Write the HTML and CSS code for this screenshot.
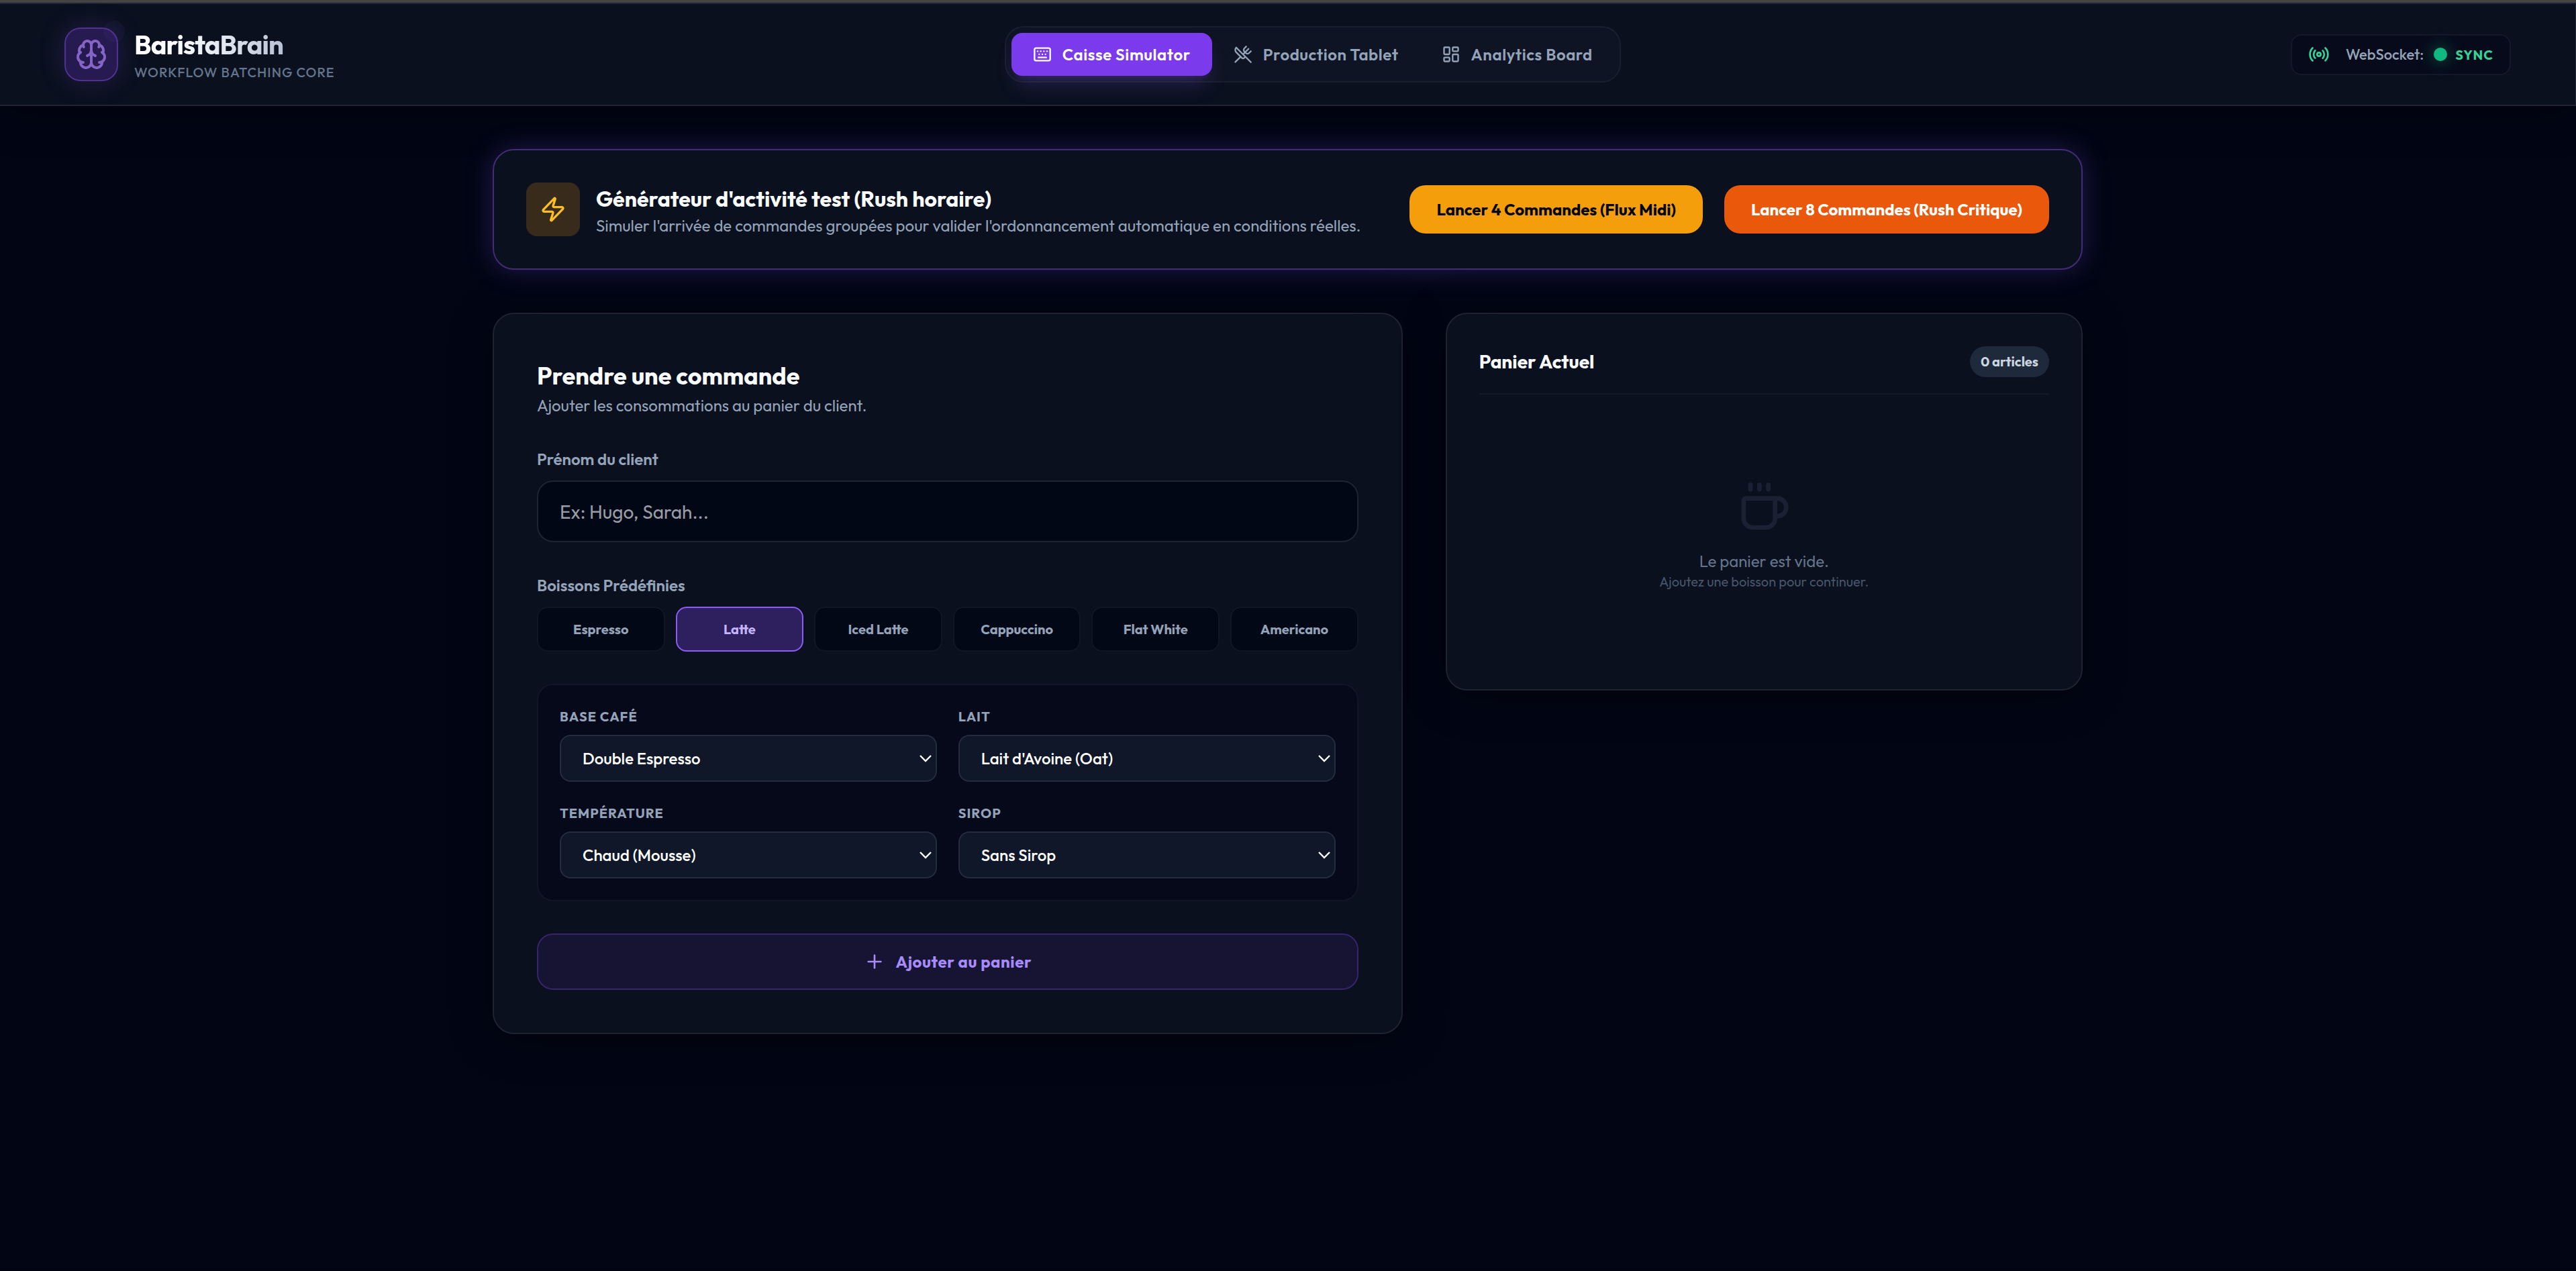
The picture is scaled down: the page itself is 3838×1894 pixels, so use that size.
FILE: index.html
```html
<!DOCTYPE html>
<html lang="fr">
<head>
  <meta charset="UTF-8">
  <meta name="viewport" content="width=device-width, initial-scale=1.0">
  <title>BaristaBrain</title>
  <link rel="stylesheet" href="styles.css">
</head>
<body>
  <header class="header">
    <div class="brand">
      <div class="logo">
        <svg class="icon" viewBox="0 0 24 24"><path d="M12 5a3 3 0 1 0-5.997.125 4 4 0 0 0-2.526 5.77 4 4 0 0 0 .556 6.588A4 4 0 1 0 12 18Z"/><path d="M12 5a3 3 0 1 1 5.997.125 4 4 0 0 1 2.526 5.77 4 4 0 0 1-.556 6.588A4 4 0 1 1 12 18Z"/><path d="M15 13a4.5 4.5 0 0 1-3-4 4.5 4.5 0 0 1-3 4"/><path d="M17.599 6.5a3 3 0 0 0 .399-1.375"/><path d="M6.003 5.125A3 3 0 0 0 6.401 6.5"/><path d="M3.477 10.896a4 4 0 0 1 .585-.396"/><path d="M19.938 10.5a4 4 0 0 1 .585.396"/><path d="M6 18a4 4 0 0 1-1.967-.516"/><path d="M19.967 17.484A4 4 0 0 1 18 18"/></svg>
      </div>
      <div>
        <h1 class="brand-name"><span>BaristaBrain</span></h1>
        <p class="brand-sub">WORKFLOW BATCHING CORE</p>
      </div>
    </div>

    <nav class="tabs">
      <button class="tab active">
        <svg class="icon" viewBox="0 0 24 24"><path d="M10 8h.01"/><path d="M12 12h.01"/><path d="M14 8h.01"/><path d="M16 12h.01"/><path d="M18 8h.01"/><path d="M6 8h.01"/><path d="M7 16h10"/><path d="M8 12h.01"/><rect width="20" height="16" x="2" y="4" rx="2"/></svg>
        Caisse Simulator
      </button>
      <button class="tab">
        <svg class="icon" viewBox="0 0 24 24"><path d="m16 2-2.3 2.3a3 3 0 0 0 0 4.2l1.8 1.8a3 3 0 0 0 4.2 0L22 8"/><path d="M15 15 3.3 3.3a4.2 4.2 0 0 0 0 6l7.3 7.3c.7.7 2 .7 2.8 0L15 15Zm0 0 7 7"/><path d="m2.1 21.8 6.4-6.3"/><path d="m19 5-7 7"/></svg>
        Production Tablet
      </button>
      <button class="tab">
        <svg class="icon" viewBox="0 0 24 24"><rect width="7" height="9" x="3" y="3" rx="1"/><rect width="7" height="5" x="14" y="3" rx="1"/><rect width="7" height="9" x="14" y="12" rx="1"/><rect width="7" height="5" x="3" y="16" rx="1"/></svg>
        Analytics Board
      </button>
    </nav>

    <div class="socket">
      <svg class="icon" viewBox="0 0 24 24"><path d="M4.9 19.1C1 15.2 1 8.8 4.9 4.9"/><path d="M7.8 16.2c-2.3-2.3-2.3-6.1 0-8.5"/><circle cx="12" cy="12" r="2"/><path d="M16.2 7.8c2.3 2.3 2.3 6.1 0 8.5"/><path d="M19.1 4.9C23 8.8 23 15.1 19.1 19"/></svg>
      <span class="socket-label">WebSocket:</span>
      <span class="socket-dot"></span>
      <span class="socket-state">SYNC</span>
    </div>
  </header>

  <main class="page">
    <section class="rush">
      <div class="rush-icon">
        <svg class="icon" viewBox="0 0 24 24"><path d="M4 14a1 1 0 0 1-.78-1.63l9.9-10.2a.5.5 0 0 1 .86.46l-1.92 6.02A1 1 0 0 0 13 10h7a1 1 0 0 1 .78 1.63l-9.9 10.2a.5.5 0 0 1-.86-.46l1.92-6.02A1 1 0 0 0 11 14z"/></svg>
      </div>
      <div class="rush-text">
        <h2>Générateur d'activité test (Rush horaire)</h2>
        <p>Simuler l'arrivée de commandes groupées pour valider l'ordonnancement automatique en conditions réelles.</p>
      </div>
      <div class="rush-actions">
        <button class="rush-btn amber">Lancer 4 Commandes (Flux Midi)</button>
        <button class="rush-btn orange">Lancer 8 Commandes (Rush Critique)</button>
      </div>
    </section>

    <div class="columns">
      <section class="card order">
        <h2>Prendre une commande</h2>
        <p class="order-sub">Ajouter les consommations au panier du client.</p>

        <label class="label" for="client">Prénom du client</label>
        <input class="input" id="client" type="text" placeholder="Ex: Hugo, Sarah...">

        <p class="label">Boissons Prédéfinies</p>
        <div class="presets">
          <button class="preset">Espresso</button>
          <button class="preset active">Latte</button>
          <button class="preset">Iced Latte</button>
          <button class="preset">Cappuccino</button>
          <button class="preset">Flat White</button>
          <button class="preset">Americano</button>
        </div>

        <div class="options">
          <div>
            <p class="option-label">BASE CAFÉ</p>
            <div class="select">Double Espresso<svg viewBox="0 0 18 10"><path d="M1 1l8 8 8-8"/></svg></div>
          </div>
          <div>
            <p class="option-label">LAIT</p>
            <div class="select">Lait d'Avoine (Oat)<svg viewBox="0 0 18 10"><path d="M1 1l8 8 8-8"/></svg></div>
          </div>
          <div>
            <p class="option-label">TEMPÉRATURE</p>
            <div class="select">Chaud (Mousse)<svg viewBox="0 0 18 10"><path d="M1 1l8 8 8-8"/></svg></div>
          </div>
          <div>
            <p class="option-label">SIROP</p>
            <div class="select">Sans Sirop<svg viewBox="0 0 18 10"><path d="M1 1l8 8 8-8"/></svg></div>
          </div>
        </div>

        <button class="add-btn">
          <svg class="icon" viewBox="0 0 24 24"><path d="M5 12h14"/><path d="M12 5v14"/></svg>
          Ajouter au panier
        </button>
      </section>

      <section class="card cart">
        <div class="cart-head">
          <h3>Panier Actuel</h3>
          <span class="badge">0 articles</span>
        </div>
        <div class="cart-empty">
          <svg class="icon" viewBox="0 0 24 24"><path d="M10 2v2"/><path d="M14 2v2"/><path d="M16 8a1 1 0 0 1 1 1v8a4 4 0 0 1-4 4H7a4 4 0 0 1-4-4V9a1 1 0 0 1 1-1h14a4 4 0 1 1 0 8h-1"/><path d="M6 2v2"/></svg>
          <p class="empty-title">Le panier est vide.</p>
          <p class="empty-sub">Ajoutez une boisson pour continuer.</p>
        </div>
      </section>
    </div>
  </main>
</body>
</html>
```

FILE: styles.css
```css
* {
  box-sizing: border-box;
  margin: 0;
  padding: 0;
}

body {
  min-height: 100vh;
  background-color: #020514;
  border-top: 4px solid #444;
  border-bottom: 1px solid #000;
  font-family: 'Outfit', 'Lato', sans-serif;
  color: #f8fafc;
}

button,
input {
  font-family: inherit;
}

button {
  border: none;
  cursor: pointer;
}

.icon {
  display: block;
  flex-shrink: 0;
  fill: none;
  stroke: currentColor;
  stroke-width: 2;
  stroke-linecap: round;
  stroke-linejoin: round;
}

/* Header */
.header {
  display: flex;
  justify-content: space-between;
  align-items: center;
  height: 154px;
  padding: 0 96px;
  background: #0a101e;
  border: 2px solid #1f2532;
  border-left: none;
  border-right-width: 1px;
  box-shadow: 0 8px 64px rgba(0, 0, 0, 0.4);
}

.brand {
  display: flex;
  align-items: center;
  gap: 24px;
}

.logo {
  position: relative;
  display: flex;
  justify-content: center;
  align-items: center;
  width: 80px;
  height: 80px;
  border: 2px solid #4f3192;
  border-radius: 24px;
  background: #261a50;
  color: #8465c6;
  box-shadow: 0 0 40px rgba(139, 92, 246, 0.2);
}

.logo::after {
  content: '';
  position: absolute;
  top: -12px;
  right: -12px;
  width: 32px;
  height: 32px;
  border-radius: 50%;
  background: rgba(139, 92, 246, 0.05);
}

.logo .icon {
  width: 48px;
  height: 48px;
}

.brand-name {
  font-size: 40px;
  line-height: 52px;
  font-weight: 700;
  letter-spacing: -0.025em;
}

.brand-name span {
  background: linear-gradient(to right, #fff 20%, #e2e8f0 60%, #b8c2d3);
  -webkit-background-clip: text;
  background-clip: text;
  color: transparent;
}

.brand-sub {
  margin-top: 2px;
  font-size: 20px;
  line-height: 28px;
  font-weight: 500;
  letter-spacing: 0.05em;
  color: #64748b;
}

.tabs {
  display: flex;
  padding: 8px;
  border: 2px solid #1a1f2e;
  border-radius: 28px;
  background: #0f1424;
}

.tab {
  display: flex;
  align-items: center;
  gap: 16px;
  height: 64px;
  padding: 0 32px;
  border-radius: 16px;
  background: none;
  font-size: 24px;
  font-weight: 600;
  letter-spacing: 0.025em;
  color: #94a3b8;
}

.tab .icon {
  width: 28px;
  height: 28px;
}

.tab.active {
  background: #7c3aed;
  color: #fff;
  box-shadow: 0 20px 30px -6px rgba(139, 92, 246, 0.2), 0 8px 12px -8px rgba(139, 92, 246, 0.2);
}

.socket {
  display: flex;
  align-items: center;
  height: 61px;
  padding: 0 24px;
  border: 2px solid #141827;
  border-radius: 16px;
  background: #070a1a;
  color: #34d399;
}

.socket .icon {
  width: 32px;
  height: 32px;
  margin-right: 24px;
}

.socket-label {
  margin-right: 15px;
  font-size: 22px;
  font-weight: 500;
  color: #94a3b8;
}

.socket-dot {
  width: 20px;
  height: 20px;
  margin-right: 12px;
  border-radius: 50%;
  background: #10b981;
  box-shadow: 0 0 24px rgba(16, 185, 129, 0.6);
}

.socket-state {
  font-size: 20px;
  font-weight: 700;
  letter-spacing: 0.05em;
}

/* Rush generator banner */
.page {
  width: 2369px;
  margin: 64px 0 0 734px;
}

.rush {
  display: flex;
  align-items: center;
  height: 180px;
  padding: 0 48px;
  border: 2px solid #3f2d76;
  border-radius: 32px;
  background: #0a101e;
  box-shadow: 0 0 40px rgba(139, 92, 246, 0.25);
}

.rush-icon {
  display: flex;
  justify-content: center;
  align-items: center;
  width: 80px;
  height: 80px;
  margin-right: 24px;
  border-radius: 16px;
  background: #392b1c;
  color: #fbbf24;
}

.rush-icon .icon {
  width: 40px;
  height: 40px;
}

.rush-text h2 {
  font-size: 32px;
  line-height: 44px;
  font-weight: 700;
}

.rush-text p {
  margin-top: 4px;
  font-size: 24px;
  line-height: 28px;
  color: #94a3b8;
}

.rush-actions {
  display: flex;
  gap: 32px;
  margin-left: auto;
}

.rush-btn {
  height: 72px;
  padding: 0 40px;
  border-radius: 24px;
  font-size: 24px;
  font-weight: 700;
}

.amber {
  background: #f59e0b;
  color: #020617;
}

.orange {
  background: #ea580c;
  color: #fff;
}

/* Columns */
.columns {
  display: grid;
  grid-template-columns: 1fr 949.33px;
  gap: 64px;
  align-items: start;
  margin-top: 64px;
}

.card {
  border: 2px solid #1d2330;
  border-radius: 32px;
  background: #0a101e;
  box-shadow: 0 8px 64px rgba(0, 0, 0, 0.4);
}

.order {
  padding: 64px;
}

.order h2 {
  font-size: 36px;
  line-height: 56px;
  font-weight: 700;
}

.order-sub {
  margin-bottom: 46px;
  font-size: 24px;
  line-height: 32px;
  color: #94a3b8;
}

.label {
  display: block;
  margin-bottom: 14px;
  font-size: 24px;
  line-height: 36px;
  font-weight: 600;
  color: #94a3b8;
}

.input {
  display: block;
  width: 100%;
  height: 92px;
  margin-bottom: 46px;
  padding: 0 32px;
  border: 2px solid #1e2432;
  border-radius: 24px;
  background: #020715;
  font-size: 28px;
  color: #fff;
}

.input::placeholder {
  color: #999ca5;
}

.presets {
  display: grid;
  grid-template-columns: repeat(6, 1fr);
  gap: 16px;
}

.preset {
  height: 67px;
  padding-bottom: 1px;
  border: 2px solid #101625;
  border-radius: 16px;
  background: #030817;
  font-size: 20px;
  font-weight: 700;
  color: #94a3b8;
}

.preset.active {
  border-color: #8b5cf6;
  background: #2e1f5e;
  color: #c4b5fd;
}

.options {
  display: grid;
  grid-template-columns: 1fr 1fr;
  gap: 32px;
  margin: 48px 0;
  padding: 32px;
  border: 2px solid #111526;
  border-radius: 24px;
  background: #06091a;
}

.option-label {
  margin-bottom: 12px;
  font-size: 20px;
  line-height: 30px;
  font-weight: 700;
  letter-spacing: 0.05em;
  color: #94a3b8;
}

.select {
  display: flex;
  justify-content: space-between;
  align-items: center;
  height: 70px;
  padding: 0 6px 0 32px;
  border: 2px solid #252d3c;
  border-radius: 16px;
  background: #0f1728;
  font-size: 24px;
  font-weight: 500;
  color: #fff;
}

.select svg {
  width: 18px;
  height: 10px;
  overflow: visible;
  fill: none;
  stroke: #fff;
  stroke-width: 2.4;
}

.add-btn {
  display: flex;
  justify-content: center;
  align-items: center;
  gap: 16px;
  width: 100%;
  height: 84px;
  border: 2px solid #36256a;
  border-radius: 24px;
  background: #161333;
  font-size: 24px;
  font-weight: 700;
  letter-spacing: 0.025em;
  color: #a78bfa;
}

.add-btn .icon {
  width: 32px;
  height: 32px;
}

/* Cart */
.cart {
  padding: 48px;
}

.cart-head {
  display: flex;
  justify-content: space-between;
  align-items: center;
  padding-bottom: 24px;
  border-bottom: 2px solid #151b29;
}

.cart-head h3 {
  font-size: 28px;
  line-height: 42px;
  font-weight: 700;
}

.badge {
  padding: 8px 16px;
  border-radius: 23px;
  background: #1e293b;
  font-size: 20px;
  line-height: 30px;
  font-weight: 700;
  color: #cbd5e1;
}

.cart-empty {
  display: flex;
  flex-direction: column;
  align-items: center;
  padding: 128px 0 97px;
}

.cart-empty .icon {
  width: 80px;
  height: 80px;
  margin-bottom: 24px;
  color: #1b2132;
}

.empty-title {
  font-size: 24px;
  line-height: 32px;
  color: #64748b;
}

.empty-sub {
  font-size: 20px;
  line-height: 30px;
  color: #475569;
}
```
